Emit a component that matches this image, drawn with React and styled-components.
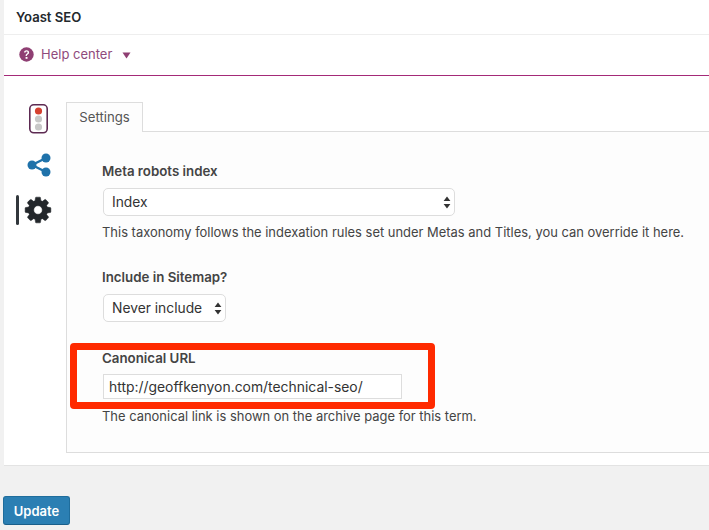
import React from "react";
import styled, { createGlobalStyle } from "styled-components";

const Global = createGlobalStyle`
  html, body { margin: 0; padding: 0; background: #f1f1f1; }
  body { width: 709px; height: 530px; overflow: hidden; font-family: Inter, Roboto, "Liberation Sans", sans-serif; color: #444; }
  * { box-sizing: border-box; }
`;

const Page = styled.div`
  width: 709px;
  height: 530px;
  padding-left: 4px;
  position: relative;
  overflow: hidden;
`;
const Metabox = styled.section`
  width: 705px;
  height: 466px;
  background: #fff;
  border-bottom: 1px solid #e3e3e3;
  display: flex;
  flex-direction: column;
`;
const Title = styled.h2`
  margin: 0;
  height: 35px;
  padding: 9px 0 0 12px;
  font-size: 13.1px;
  line-height: 17px;
  font-weight: 600;
  color: #23282d;
  border-bottom: 1px solid #eee;
`;
const HelpBar = styled.div`
  height: 41px;
  padding: 0 0 1px 15px;
  display: flex;
  align-items: center;
  border-bottom: 1px solid #a42a78;
  color: #8f4a7c;
  font-size: 13px;
`;
const HelpLabel = styled.span`
  margin-left: 7px;
  margin-top: -1px;
`;
const Caret = styled.svg`
  margin-left: 10px;
  margin-top: 2px;
`;
const Body = styled.div`
  flex: 1;
  display: flex;
  padding: 26px 0 12px 0;
`;
const Rail = styled.nav`
  width: 62px;
  display: flex;
  flex-direction: column;
  align-items: flex-start;
  flex-shrink: 0;
`;
const RailItem = styled.div`
  width: 62px;
  height: ${(p) => p.$h}px;
  padding-left: ${(p) => p.$pad}px;
  display: flex;
  align-items: center;
`;
const ActiveBar = styled.span`
  width: 3px;
  height: 30px;
  background: #32373c;
  border-radius: 2px;
  margin-right: 4px;
`;
const Content = styled.div`
  flex: 1;
  display: flex;
  flex-direction: column;
  min-width: 0;
`;
const TabRow = styled.div`
  height: 30px;
  display: flex;
  border-bottom: 1px solid #ddd;
`;
const Tab = styled.div`
  width: 77px;
  height: 30px;
  background: #fdfdfd;
  border: 1px solid #ddd;
  border-bottom: 0;
  font-size: 13.2px;
  line-height: 28px;
  text-align: center;
  color: #555;
`;
const Pane = styled.div`
  flex: 1;
  background: #fdfdfd;
  border-left: 1px solid #ddd;
  border-bottom: 1px solid #ddd;
  padding: 31px 0 0 35px;
`;
const Field = styled.div`
  margin-bottom: ${(p) => p.$mb}px;
`;
const Label = styled.label`
  display: block;
  font-size: 13.3px;
  line-height: 16px;
  font-weight: 600;
  color: #444;
  margin-bottom: ${(p) => p.$gap}px;
`;
const SelectWrap = styled.div`
  position: relative;
  width: ${(p) => p.$w}px;
  height: 28px;
  margin-left: 1px;
`;
const Select = styled.select`
  appearance: none;
  width: 100%;
  height: 100%;
  border: 1px solid #ddd;
  border-radius: 5px;
  background: #fff;
  padding: 0 0 0 8px;
  font: 13.8px Inter, Roboto, sans-serif;
  color: #333;
  outline: none;
`;
const Arrows = styled.svg`
  position: absolute;
  right: 4px;
  top: 8px;
  pointer-events: none;
`;
const Hint = styled.p`
  margin: ${(p) => p.$top}px 0 0 0;
  font-size: 12.95px;
  line-height: 16px;
  color: #444;
  white-space: nowrap;
`;
const UrlInput = styled.input`
  display: block;
  width: 299px;
  height: 25px;
  margin-left: 1px;
  border: 1px solid #ddd;
  background: #fff;
  padding: 0 5px;
  font: 13.9px Inter, Roboto, sans-serif;
  color: #333;
  outline: none;
`;
const Highlight = styled.div`
  position: absolute;
  left: 70px;
  top: 343px;
  width: 365px;
  height: 66px;
  border: 7px solid #ff2a00;
  border-radius: 4px;
  pointer-events: none;
`;
const Footer = styled.div`
  padding: 30px 0 0 0;
  margin-left: -1px;
`;
const Update = styled.button`
  width: 67px;
  height: 29px;
  background: #2b7fb3;
  border: 1px solid #1f6d9c;
  border-bottom-color: #1a5f8a;
  border-radius: 3px;
  color: #fff;
  font: 600 13px Inter, Roboto, sans-serif;
  padding: 0;
`;

const Arrow = () => (
  <Arrows width="8" height="13" viewBox="0 0 8 13">
    <path d="M4 0.5 L7.4 5 H0.6 Z M4 12.5 L0.6 8 H7.4 Z" fill="#333" />
  </Arrows>
);

export default function App() {
  return (
    <Page>
      <Global />
      <Metabox>
        <Title>Yoast SEO</Title>
        <HelpBar>
          <svg width="15" height="15" viewBox="0 0 15 15">
            <circle cx="7.5" cy="7.5" r="7.2" fill="#8f3f73" />
            <path d="M5 5.6c.1-1.5 1.2-2.3 2.6-2.3s2.5.8 2.5 2.1c0 1-.6 1.5-1.3 2-.6.4-.9.7-.9 1.3v.3H6.6v-.5c0-.9.4-1.4 1-1.8.6-.4 1-.7 1-1.2s-.4-.9-1-.9-1 .4-1.1 1z" fill="#fff" />
            <rect x="6.6" y="10" width="1.9" height="1.8" fill="#fff" />
          </svg>
          <HelpLabel>Help center</HelpLabel>
          <Caret width="9" height="7" viewBox="0 0 9 7">
            <path d="M0.5 0.5 H8.5 L4.500 6.500 Z" fill="#8f3f73" />
          </Caret>
        </HelpBar>
        <Body>
          <Rail>
            <RailItem $h={33} $pad={25}>
              <svg width="19" height="30" viewBox="0 0 19 30">
                <rect x="0.8" y="0.8" width="17.4" height="28" rx="4" fill="#fff" stroke="#5d2a52" strokeWidth="1.6" />
                <circle cx="9.5" cy="7" r="3.6" fill="#d5402f" />
                <circle cx="9.5" cy="15" r="3.6" fill="#c8c8c8" />
                <circle cx="9.5" cy="23" r="3.6" fill="#c8c8c8" />
              </svg>
            </RailItem>
            <RailItem $h={60} $pad={23}>
              <svg width="24" height="24" viewBox="0 0 24 24">
                <path d="M19 5 L5 12 L19 19" stroke="#1f72aa" strokeWidth="2.4" fill="none" />
                <circle cx="19" cy="5" r="4.5" fill="#1f72aa" />
                <circle cx="5" cy="12" r="4.5" fill="#1f72aa" />
                <circle cx="19" cy="19" r="4.5" fill="#1f72aa" />
              </svg>
            </RailItem>
            <RailItem $h={30} $pad={12}>
              <ActiveBar />
              <svg width="30" height="30" viewBox="0 0 1792 1792">
                <path fill="#23272b" stroke="#23272b" strokeWidth="30" d="M1152 896q0-106-75-181t-181-75-181 75-75 181 75 181 181 75 181-75 75-181zm512-109v222q0 12-8 23t-20 13l-185 28q-19 54-39 91 35 50 107 138 10 12 10 25t-9 23q-27 37-99 108t-94 71q-12 0-26-9l-138-108q-44 23-91 38-16 136-29 186-7 28-36 28h-222q-14 0-24.500-8.500t-11.500-21.500l-28-184q-49-16-90-37l-141 107q-10 9-25 9-14 0-25-11-126-114-165-168-7-10-7-23 0-12 8-23 15-21 51-66.500t54-70.500q-27-50-41-99l-183-27q-13-2-21-12.500t-8-23.500v-222q0-12 8-23t19-13l186-28q14-46 39-92-40-57-107-138-10-12-10-24 0-10 9-23 26-36 98.500-107.500t94.500-71.500q13 0 26 10l138 107q44-23 91-38 16-136 29-186 7-28 36-28h222q14 0 24.500 8.500t11.500 21.500l28 184q49 16 90 37l142-107q9-9 24-9 13 0 25 10 129 119 165 170 7 8 7 22 0 12-8 23-15 21-51 66.500t-54 70.500q26 50 41 98l183 28q13 2 21 12.500t8 23.500z" />
              </svg>
            </RailItem>
          </Rail>
          <Content>
            <TabRow>
              <Tab>Settings</Tab>
            </TabRow>
            <Pane>
              <Field $mb={29}>
                <Label $gap={9}>Meta robots index</Label>
                <SelectWrap $w={352}>
                  <Select defaultValue="index">
                    <option value="index">Index</option>
                  </Select>
                  <Arrow />
                </SelectWrap>
                <Hint $top={8}>This taxonomy follows the indexation rules set under Metas and Titles, you can override it here.</Hint>
              </Field>
              <Field $mb={28}>
                <Label $gap={9}>Include in Sitemap?</Label>
                <SelectWrap $w={123}>
                  <Select defaultValue="never">
                    <option value="never">Never include</option>
                  </Select>
                  <Arrow />
                </SelectWrap>
              </Field>
              <Field $mb={0}>
                <Label $gap={8}>Canonical URL</Label>
                <UrlInput readOnly value="http://geoffkenyon.com/technical-seo/" />
                <Hint $top={9}>The canonical link is shown on the archive page for this term.</Hint>
              </Field>
            </Pane>
          </Content>
        </Body>
      </Metabox>
      <Footer>
        <Update>Update</Update>
      </Footer>
      <Highlight />
    </Page>
  );
}
